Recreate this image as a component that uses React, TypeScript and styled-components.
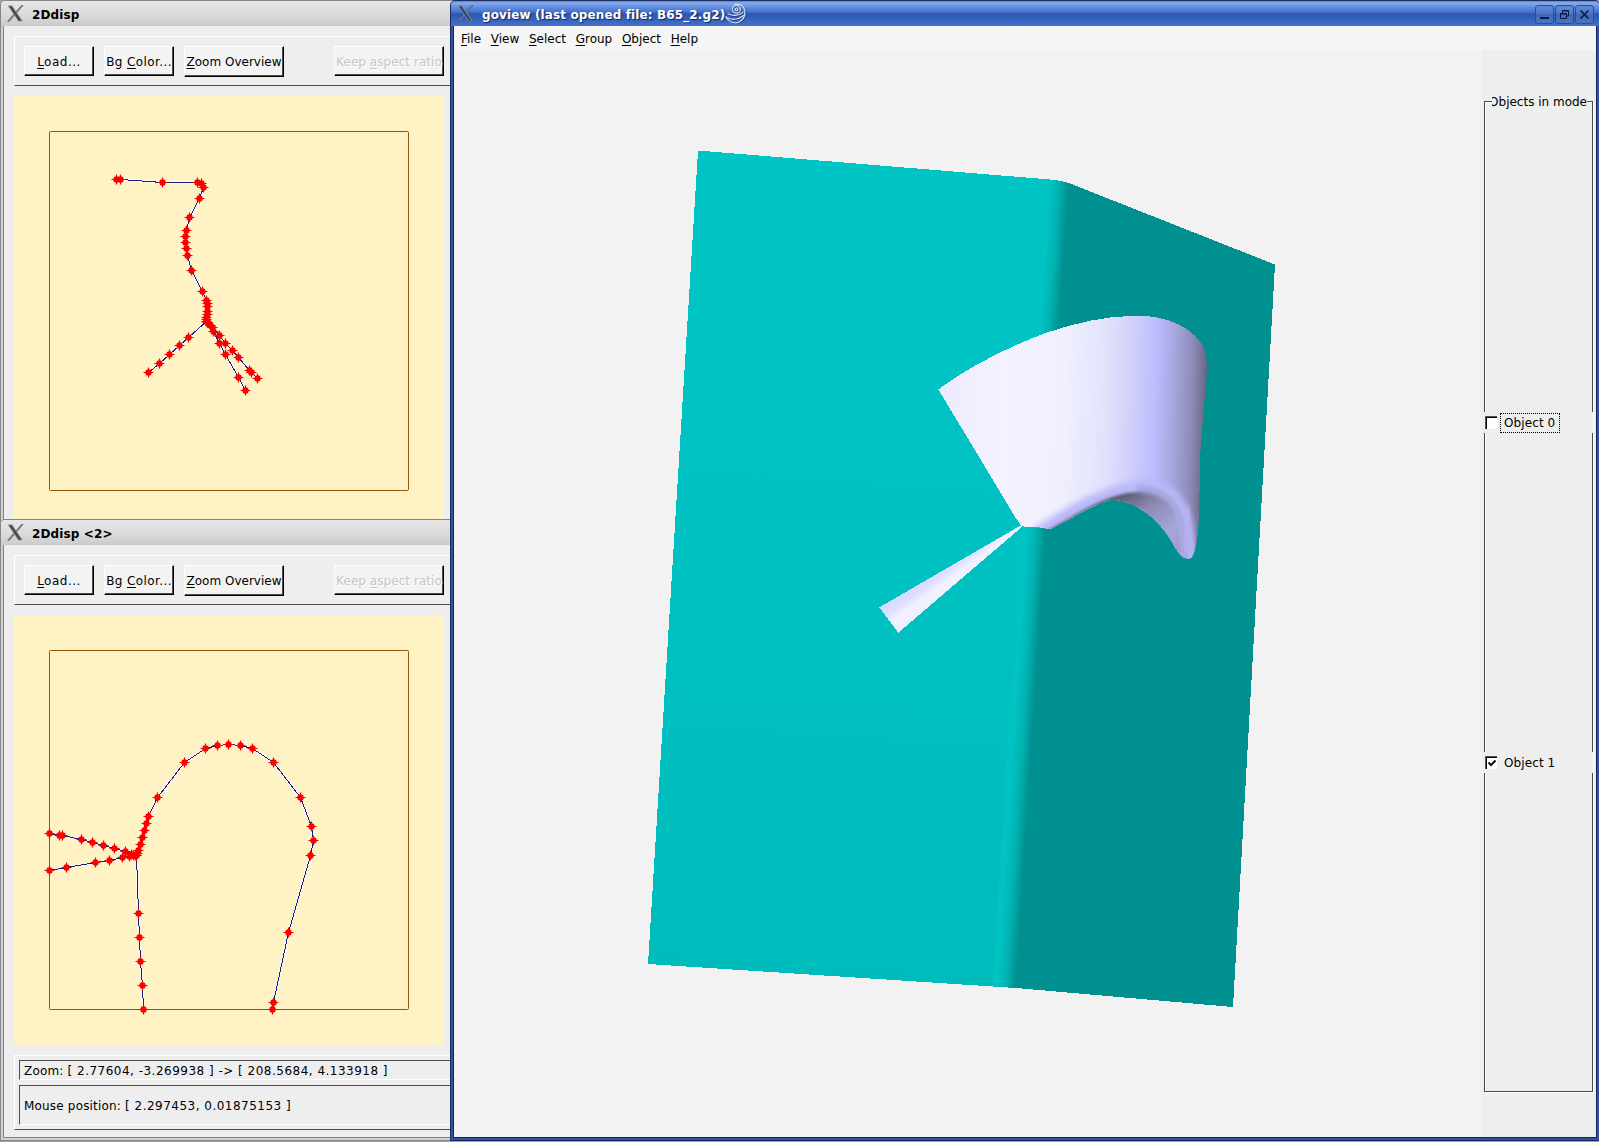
import React from "react";
import styled, { createGlobalStyle, css } from "styled-components";

const Global = createGlobalStyle`
  html, body { margin: 0; padding: 0; overflow: hidden; }
  * { box-sizing: border-box; }
  u { text-decoration: underline; text-underline-offset: 2px; text-decoration-thickness: 1px; text-decoration-skip-ink: none; }
`;

const Desktop = styled.main`
  position: relative;
  width: 1599px;
  height: 1142px;
  overflow: hidden;
  background: #8fa4bf;
  font: 12px/14px "DejaVu Sans", Verdana, sans-serif;
  color: #000;
`;

const Window = styled.section<{ $x: number; $y: number; $w: number; $h: number; $active?: boolean }>`
  position: absolute;
  left: ${(p) => p.$x}px;
  top: ${(p) => p.$y}px;
  width: ${(p) => p.$w}px;
  height: ${(p) => p.$h}px;
  display: flex;
  flex-direction: column;
  overflow: hidden;
  border: 1px solid ${(p) => (p.$active ? "#1b2c5e" : "#858585")};
  border-radius: 5px 5px 0 0;
  background: ${(p) => (p.$active ? "#3450a0" : "#d2d2d2")};
`;

const TitleBar = styled.header<{ $active?: boolean }>`
  flex: none;
  height: 25px;
  display: flex;
  align-items: center;
  padding: 2px 5px 0 6px;
  font-weight: bold;
  white-space: nowrap;
  ${(p) =>
    p.$active
      ? css`
          color: #fff;
          text-shadow: 1px 1px 1px #12265c;
          background: linear-gradient(#5a86dc 0, #86acee 2px, #5d88dc 7px, #4672cc 11px, #2c55b0 13px, #3a66c0 20px, #4471ca 25px);
        `
      : css`
          color: #000;
          background: linear-gradient(#e6e6e6, #dcdcdc 50%, #cbcbcb);
        `}
`;

const TitleText = styled.span`
  margin-left: 8px;
  letter-spacing: 0.12px;
`;

const WindowButtons = styled.div`
  margin-left: auto;
  display: flex;
  gap: 1px;
`;

const TitleButton = styled.button`
  width: 19px;
  height: 19px;
  padding: 0;
  display: flex;
  border: 1px solid #2a4c9c;
  border-radius: 3px;
  background: linear-gradient(#638ad2, #5078c6 45%, #4068b6 50%, #4a74c4);
`;

const Body = styled.div<{ $active?: boolean }>`
  flex: 1;
  min-height: 0;
  display: flex;
  flex-direction: column;
  margin: 0 2px 2px;
  border: 1px solid ${(p) => (p.$active ? "#14245a" : "#808080")};
  border-top: 0;
  background: #eee;
`;

const PlotBody = styled(Body)`
  padding: 10px 0 0 10px;
`;

const Toolbar = styled.div`
  flex: none;
  height: 50px;
  display: flex;
  align-items: flex-start;
  padding: 9px 0 0 9px;
  border: solid #fff;
  border-width: 1px 0 0 1px;
  border-bottom: 1px solid #4c4c4c;
`;

const PushButton = styled.button<{ $w: number; $tall?: boolean; $off?: boolean; $gap?: number; $track?: number }>`
  flex: none;
  width: ${(p) => p.$w}px;
  height: ${(p) => (p.$tall ? 31 : 30)}px;
  margin-right: ${(p) => p.$gap ?? 10}px;
  padding: ${(p) => (p.$tall ? "1px 0 0 0" : "2px 0 0 0")};
  border: 1px solid;
  border-color: #fff #000 #000 #fff;
  box-shadow: inset -1px -1px 0 #4c4c4c;
  background: #f3f3f3;
  font: inherit;
  letter-spacing: ${(p) => p.$track ?? 0}px;
  white-space: nowrap;
  overflow: hidden;
  color: ${(p) => (p.$off ? "#c6c6c6" : "#000")};
  text-shadow: ${(p) => (p.$off ? "1px 1px 0 #fff" : "none")};
`;

const Plot = styled.svg`
  flex: none;
  display: block;
  width: 430px;
  height: 430px;
  margin-top: 10px;
  background: #fff3c5;
`;

const StatusFrame = styled.div`
  flex: none;
  height: 75px;
  margin-top: 10px;
  padding: 4px 0 0 4px;
  display: flex;
  flex-direction: column;
  gap: 5px;
  border: solid #fff;
  border-width: 1px 0 0 1px;
  border-bottom: 1px solid #4c4c4c;
`;

const StatusLine = styled.div<{ $h: number }>`
  height: ${(p) => p.$h}px;
  display: flex;
  align-items: center;
  padding: 2px 0 0 4px;
  border: solid #4c4c4c;
  border-width: 1px 0 0 1px;
  border-bottom: 1px solid #fff;
  white-space: pre;
  letter-spacing: 0.18px;
`;

const Numbers = styled.span`
  letter-spacing: 0.49px;
`;

const MenuBar = styled.nav`
  flex: none;
  height: 24px;
  display: flex;
  gap: 9.700px;
  padding: 6px 0 0 7px;
  background: #f5f5f5;
`;

const Workspace = styled.div`
  flex: 1;
  min-height: 0;
  display: flex;
  background: #f2f2f2;
`;

const Scene = styled.svg`
  flex: none;
  display: block;
  width: 1028px;
  height: 1087px;
`;

const SidePanel = styled.aside`
  flex: 1;
  padding: 51px 2px 0 2px;
  background: #eee;
`;

const GroupBox = styled.fieldset`
  position: relative;
  height: 991px;
  width: 109px;
  margin: 0;
  padding: 310px 0 0 0;
  display: flex;
  flex-direction: column;
  gap: 319px;
  min-width: 0;
  border: 1px solid #4c4c4c;
  box-shadow: 1px 1px 0 #fff, inset 1px 1px 0 #fff;
`;

const GroupTitle = styled.div`
  position: absolute;
  left: 7px;
  top: -7px;
  width: 95px;
  height: 15px;
  display: flex;
  justify-content: flex-end;
  overflow: hidden;
  white-space: nowrap;
  background: #eee;
`;

const CheckRow = styled.label`
  flex: none;
  height: 21px;
  width: 110px;
  margin-left: -1px;
  padding-left: 1px;
  display: flex;
  align-items: center;
  border-right: 1px solid #fff;
  background: #eee;
`;

const CheckBox = styled.span`
  width: 12px;
  height: 13px;
  display: block;
  border: solid #555;
  border-width: 1px 0 0 1px;
  box-shadow: inset 1px 1px 0 #000;
  background: #fff;
`;

const CheckLabel = styled.span<{ $focus?: boolean }>`
  width: 60px;
  height: 20px;
  margin-left: 3px;
  padding: 2px 0 0 3px;
  white-space: nowrap;
  letter-spacing: 0.1px;
  border: 1px dotted ${(p) => (p.$focus ? "#000" : "transparent")};
`;

function XLogo({ light }: { light?: boolean }) {
  const ink = light ? "#35405c" : "#454545";
  const edge = light ? "#7f8ea8" : "#8c8c8c";
  return (
    <svg width="17" height="17" viewBox="0 0 17 17" style={{ marginTop: -2, flex: "none" }}>
      <path d="M14.300 .6h1.800L9.400 8.200 2.400 16.300H.6z" fill={edge} stroke={ink} strokeWidth=".5" />
      <path d="M.6.6h4.600l10.600 15.700H11.200z" fill={edge} />
      <path d="M2 1.300h2.600l9.800 14.400h-2.600z" fill={ink} />
    </svg>
  );
}

function Swirl() {
  return (
    <svg width="22" height="22" viewBox="0 0 22 22" fill="none" strokeLinecap="round" style={{ flex: "none", marginTop: -1 }}>
      {[
        { c: "#1f3c86", o: 0.8 },
        { c: "#d3dff5", o: 0 },
      ].map(({ c, o }) => (
        <g key={c} stroke={c} strokeWidth="1.200" transform={`translate(${o} ${o})`}>
          <path d="M10 1.200C15.500 .2 20 4 20 9.500 20 15.500 15.500 19.800 10.500 19.800 6.500 19.800 3 17.500 1 14" />
          <path d="M1 14C6 17.500 13.500 17 18.500 12.500M3 10.800c4.500 2.400 10.500 2.200 14.800-1.300" />
          <circle cx="11.500" cy="6.300" r="3.900" />
          <circle cx="11.500" cy="6.300" r="1.300" />
        </g>
      ))}
    </svg>
  );
}

type Pt = [number, number];

function Star({ x, y }: { x: number; y: number }) {
  return (
    <path
      transform={`translate(${x + 0.5} ${y + 0.5})`}
      fill="#fa0000"
      d="M-5-.5H-3.200L-2.500-2.500-.6-3.200V-5H.6V-3.200L2.500-2.500 3.200-.5H5V.5H3.200L2.500 2.500.6 3.200V5H-.6V3.200L-2.500 2.500-3.200.5H-5z"
    />
  );
}

function CurvePlot({ curves }: { curves: Pt[][] }) {
  return (
    <Plot viewBox="14 96 430 430">
      <rect x="49.5" y="131.500" width="359" height="359" rx="1" fill="none" stroke="#945708" />
      {curves.map((c, i) => {
        const pts = c.map(([x, y]) => `${x + 0.5},${y + 0.5}`).join(" ");
        return (
          <g key={i} fill="none">
            <polyline points={pts} stroke="#fff" strokeOpacity=".7" strokeWidth="2.600" />
            <polyline points={pts} stroke="#1a1a8c" shapeRendering="crispEdges" />
          </g>
        );
      })}
      {curves.flat().map(([x, y], i) => (
        <Star key={i} x={x} y={y} />
      ))}
    </Plot>
  );
}

const branchCurves: Pt[][] = [
  [
    [116, 179], [120, 179], [162, 182], [197, 182], [201, 183], [203, 187], [199, 198], [189, 217], [186, 230],
    [185, 236], [185, 242], [186, 248], [187, 255], [191, 270], [202, 291], [206, 300], [207, 303], [207, 306],
    [207, 311], [207, 314], [206, 317], [206, 319], [207, 322], [210, 325], [213, 331], [219, 343], [225, 354],
    [238, 377], [245, 390],
  ],
  [[206, 321], [188, 337], [179, 345], [169, 354], [159, 363], [148, 372]],
  [
    [207, 322], [212, 327], [219, 335], [225, 343], [232, 350], [238, 357], [249, 370], [251, 372], [257, 378],
  ],
];

const archCurves: Pt[][] = [
  [
    [49, 314], [59, 316], [62, 316], [81, 320], [92, 323], [103, 326], [114, 329], [125, 332], [131, 335],
    [135, 336], [137, 334], [138, 331], [140, 325], [142, 318], [144, 311], [146, 304], [148, 297], [157, 278],
    [184, 243], [205, 229], [217, 226], [228, 225], [240, 226], [252, 229], [273, 243], [300, 278], [311, 307],
    [313, 321], [310, 336], [288, 413], [273, 483], [272, 490],
  ],
  [
    [49, 351], [66, 348], [95, 343], [109, 341], [122, 338], [129, 337], [133, 336], [136, 336],
  ],
  [
    [136, 336], [138, 394], [139, 418], [140, 442], [142, 466], [143, 490],
  ],
];

function PlotWindow({ title, y, curves, children }: { title: string; y: number; curves: Pt[][]; children?: React.ReactNode }) {
  return (
    <Window $x={0} $y={y} $w={620} $h={622}>
      <TitleBar>
        <XLogo />
        <TitleText>{title}</TitleText>
      </TitleBar>
      <PlotBody>
        <Toolbar>
          <PushButton $w={70} $track={0.5}><u>L</u>oad...</PushButton>
          <PushButton $w={70} $track={0.4}>Bg <u>C</u>olor...</PushButton>
          <PushButton $w={100} $tall $gap={50}><u>Z</u>oom Overview</PushButton>
          <PushButton $w={110} $off $track={0.05}>Keep <u>a</u>spect ratio</PushButton>
        </Toolbar>
        <CurvePlot curves={curves} />
        {children}
      </PlotBody>
    </Window>
  );
}

const horn =
  "M205 298C300 228 420 168 530 128 620 98 700 80 780 78H825C920 82 1012 140 1010 215V260L990 500 988 640C987 710 980 806 958 806 938 808 925 795 905 755 870 695 800 628 720 630 660 648 600 690 540 718L516 713 455 709 438 685z";
const lip = "M500 732C600 664 700 606 810 588 900 580 962 630 962 830";

function Surfaces() {
  return (
    <Scene viewBox="454 50 1028 1087">
      <defs>
        <linearGradient id="slab" gradientUnits="userSpaceOnUse" x1="1026" y1="300" x2="1061" y2="302.300">
          <stop offset="0" stopColor="#00c1c1" />
          <stop offset=".45" stopColor="#00c3c3" />
          <stop offset=".7" stopColor="#00b4b3" />
          <stop offset="1" stopColor="#009090" />
        </linearGradient>
        <linearGradient id="slabLeft" gradientUnits="userSpaceOnUse" x1="860" y1="150" x2="800" y2="990">
          <stop offset="0" stopColor="#00c5c5" />
          <stop offset=".5" stopColor="#00c1c1" />
          <stop offset="1" stopColor="#00bbbc" />
        </linearGradient>
        <linearGradient id="horn" gradientUnits="userSpaceOnUse" x1="205" y1="300" x2="1010" y2="320">
          <stop offset="0" stopColor="#ebebfe" />
          <stop offset=".25" stopColor="#f3f3ff" />
          <stop offset=".47" stopColor="#efeffd" />
          <stop offset=".62" stopColor="#e2e2fd" />
          <stop offset=".73" stopColor="#cecefa" />
          <stop offset=".81" stopColor="#bcbbff" />
          <stop offset=".88" stopColor="#a6a5dc" />
          <stop offset=".95" stopColor="#8a89b5" />
          <stop offset="1" stopColor="#666580" />
        </linearGradient>
        <linearGradient id="inside" gradientUnits="userSpaceOnUse" x1="790" y1="610" x2="870" y2="730">
          <stop offset="0" stopColor="#69667e" />
          <stop offset=".4" stopColor="#8b89b0" />
          <stop offset="1" stopColor="#a5a3d8" />
        </linearGradient>
        <linearGradient id="crease" gradientUnits="userSpaceOnUse" x1="520" y1="0" x2="900" y2="0">
          <stop offset="0" stopColor="#8280a4" />
          <stop offset=".4" stopColor="#5c5a72" />
          <stop offset=".7" stopColor="#5f5d76" />
          <stop offset="1" stopColor="#8c8ab4" stopOpacity="0" />
        </linearGradient>
        <linearGradient id="wedge" gradientUnits="userSpaceOnUse" x1="36" y1="945" x2="92" y2="1022">
          <stop offset="0" stopColor="#d9d9ff" />
          <stop offset=".35" stopColor="#dedeff" />
          <stop offset=".6" stopColor="#f2f2ff" />
          <stop offset="1" stopColor="#eeeeff" />
        </linearGradient>
        <filter id="soft" x="-20%" y="-20%" width="140%" height="140%">
          <feGaussianBlur stdDeviation="10" />
        </filter>
        <filter id="fine" x="-20%" y="-20%" width="140%" height="140%">
          <feGaussianBlur stdDeviation="5" />
        </filter>
        <clipPath id="hornClip"><path d={horn} /></clipPath>
      </defs>
      <path d="M698 150.500L1050 179.500Q1062 180.500 1070 183.500L1275 264.500 1233 1007 1016 988 648 964z" fill="url(#slab)" shapeRendering="crispEdges" />
      <path d="M698 150.500L1043 179.200 992 986.300 648 964z" fill="url(#slabLeft)" shapeRendering="crispEdges" />
      <g transform="translate(870 290) scale(.33333)">
        <path d={horn} fill="url(#horn)" shapeRendering="crispEdges" />
        <g clipPath="url(#hornClip)" fill="none">
          <path d={lip} stroke="#b9b8f8" strokeWidth="36" filter="url(#soft)" />
          <path d="M800 600C890 596 945 650 942 800" stroke="#a9a8e2" strokeWidth="26" filter="url(#fine)" />
          <path d="M720 634C750 618 780 615 825 614 885 617 915 650 920 690 921 720 917 745 912 780L850 740 760 680z" fill="url(#inside)" filter="url(#fine)" />
          <path d="M532 728C600 694 650 656 725 629 780 610 850 604 900 640" stroke="url(#crease)" strokeWidth="16" filter="url(#fine)" />
          <path d="M950 650C962 690 957 740 945 790" stroke="#b3b1ef" strokeWidth="24" filter="url(#soft)" />
          <path d="M1000 520C988 640 996 720 980 800" stroke="#77759b" strokeWidth="13" filter="url(#fine)" />
        </g>
        <path d="M28 952L446 710 458 706 452 714 85 1028z" fill="url(#wedge)" shapeRendering="crispEdges" />
      </g>
    </Scene>
  );
}

export default function App() {
  return (
    <Desktop>
      <Global />
      <PlotWindow title="2Ddisp" y={0} curves={branchCurves} />
      <PlotWindow title="2Ddisp <2>" y={519} curves={archCurves}>
        <StatusFrame>
          <StatusLine $h={20}>
            Zoom: <Numbers>[ 2.77604, -3.269938 ] -&gt; [ 208.5684, 4.133918 ]</Numbers>
          </StatusLine>
          <StatusLine $h={40}>
            Mouse position: <Numbers>[ 2.297453, 0.01875153 ]</Numbers>
          </StatusLine>
        </StatusFrame>
      </PlotWindow>
      <Window $x={450} $y={0} $w={1150} $h={1141} $active>
        <TitleBar $active>
          <XLogo light />
          <TitleText>goview (last opened file: B65_2.g2)</TitleText>
          <Swirl />
          <WindowButtons>
            <TitleButton aria-label="Minimize">
              <svg width="17" height="17"><path d="M4 12h9" stroke="#0c1a44" strokeWidth="2" /></svg>
            </TitleButton>
            <TitleButton aria-label="Restore">
              <svg width="17" height="17" fill="none" stroke="#0c1a44">
                <path d="M4.500 7.500h6v5h-6zM4.500 8h6M6.500 7V4.500h6v5.500H11M6.500 5h6" />
              </svg>
            </TitleButton>
            <TitleButton aria-label="Close">
              <svg width="17" height="17"><path d="M4.500 4.500l8 8M12.500 4.500l-8 8" stroke="#0c1a44" strokeWidth="1.700" /></svg>
            </TitleButton>
          </WindowButtons>
        </TitleBar>
        <Body $active>
          <MenuBar>
            {["File", "View", "Select", "Group", "Object", "Help"].map((m) => (
              <span key={m}><u>{m[0]}</u>{m.slice(1)}</span>
            ))}
          </MenuBar>
          <Workspace>
            <Surfaces />
            <SidePanel>
              <GroupBox>
                <GroupTitle>Objects in mode</GroupTitle>
                <CheckRow>
                  <CheckBox />
                  <CheckLabel $focus>Object 0</CheckLabel>
                </CheckRow>
                <CheckRow>
                  <CheckBox>
                    <svg width="11" height="12" style={{ display: "block" }}>
                      <path d="M2.500 5.500l2.500 2.700L9.500 3.500" fill="none" stroke="#000" strokeWidth="1.900" />
                    </svg>
                  </CheckBox>
                  <CheckLabel>Object 1</CheckLabel>
                </CheckRow>
              </GroupBox>
            </SidePanel>
          </Workspace>
        </Body>
      </Window>
    </Desktop>
  );
}
